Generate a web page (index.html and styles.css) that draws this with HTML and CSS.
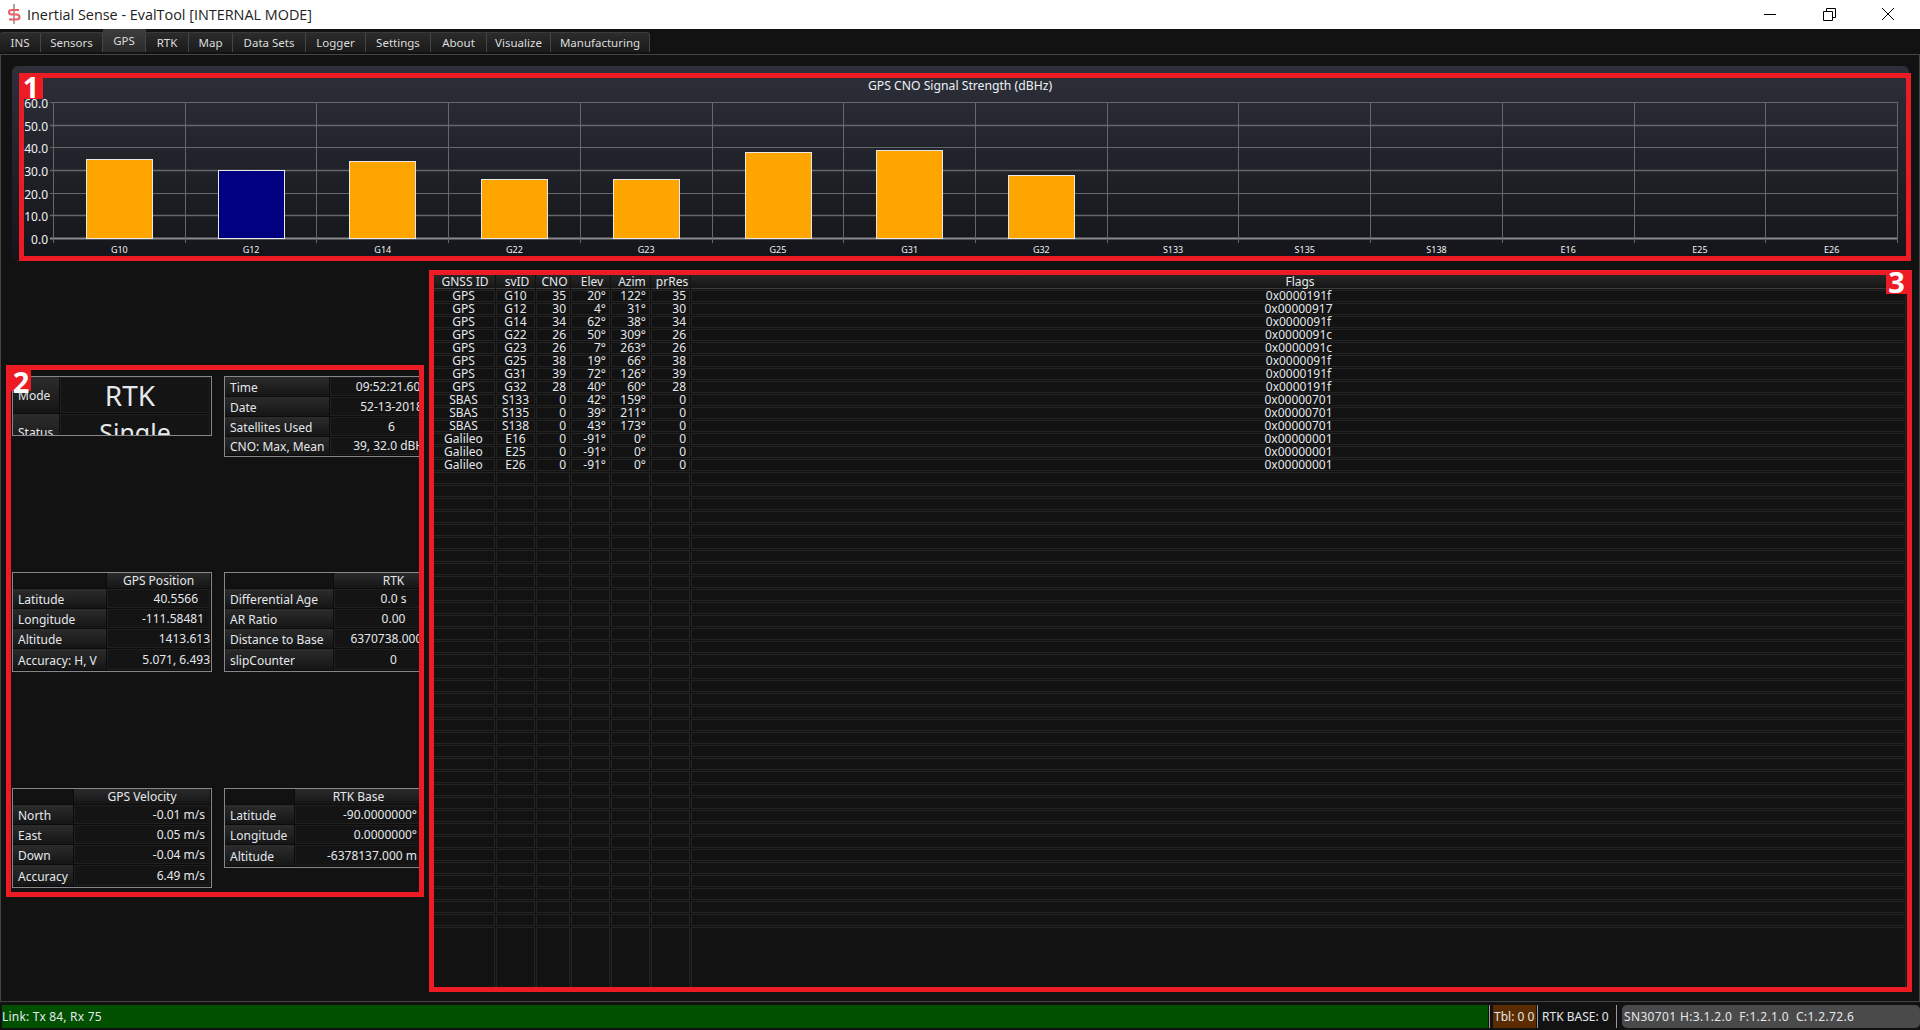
FILE: index.html
```html
<!DOCTYPE html>
<html lang="en">
<head>
    <meta charset="UTF-8">
    <title>Inertial Sense - EvalTool</title>
    <link rel="stylesheet" href="styles.css">
</head>
<body>
    <div class="app">
        <header class="titlebar">
            <svg class="logo" width="24" height="29" viewBox="0 0 24 29">
                <path d="M13 4V24" stroke="#a9a9a9" stroke-width="2" fill="none"/>
                <path d="M18 10H11Q8 10 8 12.2Q8 14.5 11 14.5H15.5Q18.5 14.5 18.5 17Q18.5 19.5 15.5 19.5H8" stroke="#ee5a5f" stroke-width="2" fill="none"/>
            </svg>
            <span class="title">Inertial Sense - EvalTool [INTERNAL MODE]</span>
            <div class="winbtns">
                <svg width="58" height="29" viewBox="0 0 58 29"><path d="M23 14.500H35" stroke="#000" fill="none"/></svg>
                <svg width="58" height="29" viewBox="0 0 58 29"><path d="M23.500 11.500H32.500V20.500H23.500ZM26.500 11.500V8.500H35.500V17.500H32.500" stroke="#000" fill="none"/></svg>
                <svg width="58" height="29" viewBox="0 0 58 29"><path d="M23 8L35 20M35 8L23 20" stroke="#000" fill="none"/></svg>
            </div>
        </header>

        <nav class="tabs">
            <a class="tab tab-ins">INS</a>
            <a class="tab tab-sensors">Sensors</a>
            <a class="tab tab-gps active">GPS</a>
            <a class="tab tab-rtk">RTK</a>
            <a class="tab tab-map">Map</a>
            <a class="tab tab-sets">Data Sets</a>
            <a class="tab tab-logger">Logger</a>
            <a class="tab tab-settings">Settings</a>
            <a class="tab tab-about">About</a>
            <a class="tab tab-visualize">Visualize</a>
            <a class="tab tab-mfg">Manufacturing</a>
        </nav>

        <main class="content">
            <section class="chart-panel">
                <svg id="chart" width="1896" height="195" viewBox="0 0 1896 195"></svg>
            </section>

            <div class="lower">
                <section class="info-pane">
                    <div class="info-col">
                        <table class="info mode">
                            <tr><td class="lbl">Mode</td><td class="big big-mode">RTK</td></tr>
                            <tr><td class="lbl">Status</td><td class="big big-status">Single</td></tr>
                        </table>
                        <table class="info headed gps-pos">
                            <tr><th></th><th>GPS Position</th></tr>
                            <tr><td class="lbl">Latitude</td><td class="val pad-l">40.5566</td></tr>
                            <tr><td class="lbl">Longitude</td><td class="val pad-m">-111.58481</td></tr>
                            <tr><td class="lbl">Altitude</td><td class="val pad-0">1413.613</td></tr>
                            <tr><td class="lbl">Accuracy: H, V</td><td class="val pad-0">5.071, 6.493</td></tr>
                        </table>
                        <table class="info headed gps-vel">
                            <tr><th></th><th>GPS Velocity</th></tr>
                            <tr><td class="lbl">North</td><td class="val">-0.01 m/s</td></tr>
                            <tr><td class="lbl">East</td><td class="val">0.05 m/s</td></tr>
                            <tr><td class="lbl">Down</td><td class="val">-0.04 m/s</td></tr>
                            <tr><td class="lbl">Accuracy</td><td class="val">6.49 m/s</td></tr>
                        </table>
                    </div>
                    <div class="info-col">
                        <table class="info wide time">
                            <tr><td class="lbl">Time</td><td class="mid">09:52:21.600</td></tr>
                            <tr><td class="lbl">Date</td><td class="mid">52-13-2018</td></tr>
                            <tr><td class="lbl">Satellites Used</td><td class="mid">6</td></tr>
                            <tr><td class="lbl">CNO: Max, Mean</td><td class="mid">39, 32.0 dBHz</td></tr>
                        </table>
                        <table class="info headed wide rtk">
                            <tr><th></th><th>RTK</th></tr>
                            <tr><td class="lbl">Differential Age</td><td class="mid">0.0 s</td></tr>
                            <tr><td class="lbl">AR Ratio</td><td class="mid">0.00</td></tr>
                            <tr><td class="lbl">Distance to Base</td><td class="mid">6370738.000 m</td></tr>
                            <tr><td class="lbl">slipCounter</td><td class="mid">0</td></tr>
                        </table>
                        <table class="info headed rtk-base">
                            <tr><th></th><th>RTK Base</th></tr>
                            <tr><td class="lbl">Latitude</td><td class="val">-90.0000000°</td></tr>
                            <tr><td class="lbl">Longitude</td><td class="val">0.0000000°</td></tr>
                            <tr><td class="lbl">Altitude</td><td class="val">-6378137.000 m</td></tr>
                        </table>
                    </div>
                </section>

                <section class="sat-wrap">
                    <table class="sats">
                        <colgroup>
                            <col class="c-id"><col class="c-sv"><col class="c-cno"><col class="c-n"><col class="c-n"><col class="c-n"><col>
                        </colgroup>
                        <thead>
                            <tr><th>GNSS ID</th><th>svID</th><th>CNO</th><th>Elev</th><th>Azim</th><th>prRes</th><th>Flags</th></tr>
                        </thead>
                        <tbody id="satRows"></tbody>
                    </table>
                </section>
            </div>
        </main>

        <footer class="statusbar">
            <div class="st-link">Link: Tx 84, Rx 75</div>
            <div class="st-sep"></div>
            <div class="st-tbl">Tbl: 0 0</div>
            <div class="st-sep"></div>
            <div class="st-base">RTK BASE: 0</div>
            <div class="st-sep"></div>
            <div class="st-dev">SN30701 H:3.1.2.0&nbsp; F:1.2.1.0&nbsp; C:1.2.72.6</div>
        </footer>
    </div>

    <!-- red callouts drawn over the screenshot -->
    <div class="mark mark-1"><span class="mark-num">1</span></div>
    <div class="mark mark-2"><span class="mark-num">2</span></div>
    <div class="mark mark-3"><span class="mark-num">3</span></div>

    <script src="script.js"></script>
</body>
</html>
```

FILE: styles.css
```css
* {
    box-sizing: border-box;
}

html, body {
    margin: 0;
    padding: 0;
    height: 100%;
    overflow: hidden;
}

body {
    font-family: "Noto Sans", "Liberation Sans", sans-serif;
    font-size: 12px;
    color: #e4e8ec;
    background-color: #121212;
}

.app {
    display: flex;
    flex-direction: column;
    height: 1030px;
}

/* title bar */
.titlebar {
    flex: 0 0 29px;
    display: flex;
    align-items: center;
    background-color: #fff;
    color: #222;
}

.logo {
    flex: none;
    margin-left: 1px;
}

.title {
    font-family: "Open Sans", sans-serif;
    font-size: 14.4px;
    margin-left: 2px;
}

.winbtns {
    display: flex;
    margin-left: auto;
    margin-right: 3px;
}

.winbtns svg {
    display: block;
}

.winbtns svg:not(:last-child) {
    margin-right: 1px;
}

/* tabs */
.tabs {
    flex: 0 0 26px;
    display: flex;
    align-items: flex-end;
    padding-bottom: 2px;
    border-bottom: 1px solid #444;
    background-color: #121212;
}

.tab {
    height: 20px;
    line-height: 20px;
    font-size: 11.5px;
    text-align: center;
    color: #dcdcdc;
    background: linear-gradient(#2c2c2c, #1a1a1a);
    border-right: 1px solid #454545;
    border-top: 1px solid #3a3a3a;
}

.tab-ins { width: 41px; border-top-left-radius: 3px; }
.tab-sensors { width: 62px; }
.tab-gps { width: 43px; height: 23px; line-height: 22px; background: linear-gradient(#3c3c3c, #2b2b2b); }
.tab-rtk { width: 43px; }
.tab-map { width: 44px; }
.tab-sets { width: 73px; }
.tab-logger { width: 60px; }
.tab-settings { width: 65px; }
.tab-about { width: 56px; }
.tab-visualize { width: 64px; }
.tab-mfg { width: 99px; border-top-right-radius: 3px; }

/* main area */
.content {
    flex: 1;
    display: flex;
    flex-direction: column;
    min-height: 0;
    border-left: 1px solid #444;
    border-right: 1px solid #444;
    border-bottom: 1px solid #444;
}

.chart-panel {
    flex: 0 0 195px;
    margin: 11px 10px 0 11px;
    border-radius: 6px 6px 0 0;
    background: linear-gradient(#2d3039, #14151a);
}

#chart {
    display: block;
}

#chart text {
    font-family: "Noto Sans", sans-serif;
    fill: #eef2f6;
}

.lower {
    flex: 1;
    display: flex;
    min-height: 0;
}

/* left side info tables */
.info-pane {
    flex: 0 0 423px;
    display: flex;
    gap: 12px;
    padding: 115px 0 0 11px;
    overflow: hidden;
}

.info-col {
    flex: 0 0 200px;
    display: flex;
    flex-direction: column;
    align-items: flex-start;
}

.info {
    width: 200px;
    table-layout: fixed;
    border-collapse: separate;
    border-spacing: 0;
    border: 1px solid #85878a;
    flex: none;
}

.info.wide {
    width: 231px;
}

.info td, .info th {
    height: 20px;
    padding: 0;
    font-weight: normal;
    line-height: 16px;
    white-space: nowrap;
    border: 1px solid #0c0c0c;
    border-width: 0 1px 1px 0;
}

.info th {
    height: 16px;
    padding-top: 1px;
    line-height: 14px;
    text-align: center;
    background: linear-gradient(#2a2a2a, #161616);
}

.info th:first-child {
    background: none;
}

.info .lbl {
    padding: 2px 0 0 5px;
    background: linear-gradient(#2c2c2c, #151515);
    overflow: hidden;
}

.info .val {
    text-align: right;
    padding-right: 5px;
    background-color: #141414;
    box-shadow: inset 0 0 0 1px #1f1f1f;
}

.info .mid {
    text-align: center;
    background-color: #141414;
    box-shadow: inset 0 0 0 1px #1f1f1f;
}

.info .val.pad-l { padding-right: 12px; }
.info .val.pad-m { padding-right: 6px; }
.info .val.pad-0 { padding-right: 0; overflow: visible; }

.headed tr:last-child td {
    height: 22px;
}

.mode {
    height: 60px;
    display: block;
    overflow: hidden;
    margin-bottom: 136px;
}

.mode td {
    height: 37px;
}

.mode .lbl {
    width: 47px;
    padding-left: 5px;
}

.mode .big {
    width: 151px;
    line-height: 34px;
    text-align: center;
    background-color: #141414;
    box-shadow: inset 0 0 0 1px #1f1f1f;
}

.mode .big-mode {
    padding: 0 10px 0 0;
    font-size: 28px;
}

.mode .big-status {
    font-size: 25px;
}

.time {
    margin-bottom: 115px;
}

.time tr:last-child td {
    height: 18px;
}

.time .lbl { width: 105px; }

.gps-pos, .rtk {
    margin-bottom: 116px;
}

.gps-pos th:first-child, .gps-pos .lbl { width: 94px; }
.gps-vel th:first-child, .gps-vel .lbl { width: 61px; }
.rtk th:first-child, .rtk .lbl { width: 109px; }
.rtk-base th:first-child, .rtk-base .lbl { width: 70px; }

/* satellite table */
.sat-wrap {
    flex: 1;
    margin: 10px 11px 10px 6px;
    border: 1px solid #85878a;
    overflow: hidden;
}

.sats {
    width: 100%;
    table-layout: fixed;
    border-collapse: separate;
    border-spacing: 1px;
}

.c-id { width: 63px; }
.c-sv { width: 39px; }
.c-cno { width: 34px; }
.c-n { width: 39px; }

.sats th {
    height: 16px;
    padding: 1px 0 0 3px;
    font-weight: normal;
    line-height: 13px;
    background: linear-gradient(#2a2a2a, #161616);
    border-bottom: 1px solid #3c3c3c;
}

.sats td {
    height: 12px;
    padding: 0 3px 0 0;
    line-height: 10px;
    text-align: right;
    white-space: nowrap;
    border: 1px solid #232323;
}

.sats td.ctr {
    padding-right: 0;
    text-align: center;
}

.sats tr.filler td {
    height: 66px;
}

/* status bar */
.statusbar {
    flex: 0 0 25px;
    display: flex;
    align-items: stretch;
    padding: 3px 0 2px 2px;
    line-height: 23px;
    background-color: #121212;
}

.st-link {
    flex: 1;
    background-color: #005000;
    letter-spacing: 0.2px;
    white-space: nowrap;
    overflow: hidden;
}

.st-sep {
    flex: none;
    width: 1px;
    background-color: #9a9a9a;
    margin: 0 1px;
}

.st-link + .st-sep {
    margin: 0 3px 0 1px;
}

.st-tbl {
    flex: none;
    width: 43px;
    padding-left: 1px;
    background-color: #5a2c00;
    white-space: nowrap;
    overflow: hidden;
}

.st-base {
    flex: none;
    width: 76px;
    padding-left: 3px;
    white-space: nowrap;
    overflow: hidden;
}

.st-base + .st-sep {
    margin: 0 5px 0 1px;
}

.st-dev {
    flex: none;
    width: 298px;
    padding-left: 2px;
    border-radius: 5px;
    background-color: #4a4a4a;
    letter-spacing: 0.35px;
    white-space: nowrap;
    overflow: hidden;
}

/* callouts */
.mark {
    position: absolute;
    border: 5px solid #ed1c24;
}

.mark-1 { left: 19px; top: 73px; width: 1892px; height: 188px; }
.mark-2 { left: 6px; top: 365px; width: 418px; height: 532px; }
.mark-3 { left: 429px; top: 270px; width: 1483px; height: 722px; }

.mark-num {
    position: absolute;
    font-family: "Open Sans", sans-serif;
    font-weight: 700;
    font-size: 29px;
    line-height: 24px;
    text-align: center;
    color: #fff;
    background-color: #ed1c24;
}

.mark-1 .mark-num { left: -5px; top: -5px; width: 24px; height: 26px; line-height: 28px; }
.mark-2 .mark-num { left: 0; top: 0; width: 20px; height: 21px; }
.mark-3 .mark-num { right: 0; top: -5px; width: 21px; height: 24px; }
```

FILE: script.js
```js
// gnss, svID, cno, elev, azim, flags
const sats = [
    ['GPS', 'G10', 35, 20, 122, '0x0000191f'],
    ['GPS', 'G12', 30, 4, 31, '0x00000917'],
    ['GPS', 'G14', 34, 62, 38, '0x0000091f'],
    ['GPS', 'G22', 26, 50, 309, '0x0000091c'],
    ['GPS', 'G23', 26, 7, 263, '0x0000091c'],
    ['GPS', 'G25', 38, 19, 66, '0x0000091f'],
    ['GPS', 'G31', 39, 72, 126, '0x0000191f'],
    ['GPS', 'G32', 28, 40, 60, '0x0000191f'],
    ['SBAS', 'S133', 0, 42, 159, '0x00000701'],
    ['SBAS', 'S135', 0, 39, 211, '0x00000701'],
    ['SBAS', 'S138', 0, 43, 173, '0x00000701'],
    ['Galileo', 'E16', 0, -91, 0, '0x00000001'],
    ['Galileo', 'E25', 0, -91, 0, '0x00000001'],
    ['Galileo', 'E26', 0, -91, 0, '0x00000001']
];

const TOTAL_ROWS = 49;

function buildChart() {
    const left = 41.5, right = 1885.5, top = 36, bottom = 172;
    const colW = (right - left) / sats.length;
    const rowH = (bottom - top) / 6;
    let svg = '';

    for (let i = 0; i <= 6; i++) {
        const y = Math.round(top + i * rowH) + 0.5;
        const w = i === 6 ? 2 : (i % 2 ? 1.5 : 1);
        svg += `<line x1="38" x2="${right}" y1="${y}" y2="${y}" stroke="${i === 6 ? '#8a8a8e' : '#66676c'}" stroke-width="${w}"/>`;
        svg += `<text x="36" y="${y + 5}" text-anchor="end" font-size="12">${(60 - i * 10).toFixed(1)}</text>`;
    }
    for (let i = 0; i <= sats.length; i++) {
        const x = Math.floor(left + i * colW) + 0.5;
        svg += `<line x1="${x}" x2="${x}" y1="${top}" y2="${bottom + 5}" stroke="#66676c"/>`;
    }
    sats.forEach((s, i) => {
        const cx = left + (i + 0.5) * colW;
        if (s[2] > 0) {
            const h = s[2] * (bottom - top) / 60;
            const fill = s[1] === 'G12' ? '#000080' : '#ffa500';
            svg += `<rect x="${Math.floor(cx - colW / 4) + 0.5}" y="${Math.round(bottom - h) + 0.5}" width="${Math.round(colW / 2)}" height="${Math.round(h)}" fill="${fill}" stroke="#e8e8e8"/>`;
        }
        svg += `<text x="${cx}" y="187" text-anchor="middle" font-size="9">${s[1]}</text>`;
    });
    svg += `<text x="948" y="24" text-anchor="middle" font-size="12.2">GPS CNO Signal Strength (dBHz)</text>`;
    document.getElementById('chart').innerHTML = svg;
}

function buildTable() {
    let rows = '';
    sats.forEach(s => {
        rows += `<tr><td class="ctr">${s[0]}</td><td class="ctr">${s[1]}</td><td>${s[2]}</td>` +
            `<td>${s[3]}°</td><td>${s[4]}°</td><td>${s[2]}</td><td class="ctr">${s[5]}</td></tr>`;
    });
    const empty = '<td></td>'.repeat(7);
    for (let i = sats.length; i < TOTAL_ROWS; i++) {
        rows += `<tr>${empty}</tr>`;
    }
    rows += `<tr class="filler">${empty}</tr>`;
    document.getElementById('satRows').innerHTML = rows;
}

buildChart();
buildTable();
```
